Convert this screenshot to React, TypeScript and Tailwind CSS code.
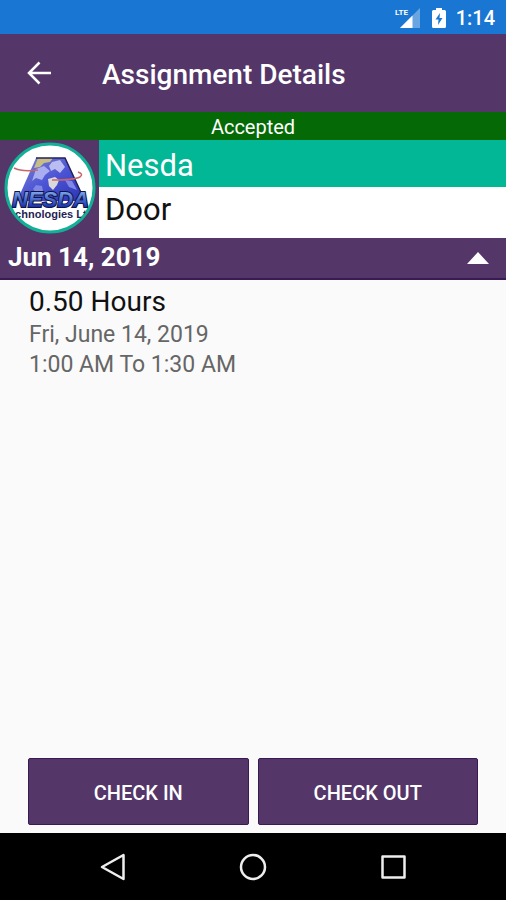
import { useState } from "react";

function StatusBar() {
  return (
    <div className="flex h-[34px] items-center justify-end bg-[#1976d2] pt-px pr-[11px] text-white">
      <svg width="26" height="24" viewBox="0 0 26 24" role="img" aria-label="LTE signal">
        <path d="M25 2V22H5Z" fill="#fff" opacity=".35" />
        <path d="M17.500 9.500V22H5Z" fill="#fff" />
        <path d="M0 1H15V10H0Z" fill="#1976d2" />
        <text x="0" y="9" fontSize="8" fontWeight="700" fontFamily="Roboto, sans-serif" fill="#fff">LTE</text>
      </svg>
      <svg className="ml-[10px]" width="16" height="22" viewBox="0 0 16 22" role="img" aria-label="Battery charging">
        <path d="M5 1h6v2h2.500q1.500 0 1.500 1.500v15q0 1.500-1.500 1.500h-11Q1 21 1 19.500v-15Q1 3 2.500 3H5Z" fill="#fff" />
        <path d="M9 6L4.500 12.500H7.500L7 18L11.500 11H8.500Z" fill="#1976d2" />
      </svg>
      <span className="ml-[9px] text-[20px] leading-6 font-medium">1:14</span>
    </div>
  );
}

function Logo() {
  return (
    <svg width="92" height="92" viewBox="0 0 92 92" role="img" aria-label="Nesda Technologies">
      <defs>
        <clipPath id="disc">
          <circle cx="46" cy="46" r="43" />
        </clipPath>
        <clipPath id="peak">
          <path d="M32 16H61L81 59H13Z" />
        </clipPath>
        <linearGradient id="sky" x1="0" y1="0" x2="1" y2="1">
          <stop offset="0" stopColor="#8086cc" />
          <stop offset=".5" stopColor="#4c54d6" />
          <stop offset="1" stopColor="#2a32b4" />
        </linearGradient>
        <linearGradient id="letters" x1="0" y1="0" x2="0" y2="1">
          <stop offset=".2" stopColor="#7aa3e8" />
          <stop offset=".8" stopColor="#1731b0" />
        </linearGradient>
      </defs>
      <circle cx="46" cy="46" r="44" fill="#fff" stroke="#12b096" strokeWidth="3" />
      <g clipPath="url(#disc)">
        <path d="M32 16H61L81 59H13Z" fill="url(#sky)" />
        <g clipPath="url(#peak)">
          <path d="M34 16h15l-3 4-6 1-4 4-6 1Z" fill="#c9bd86" />
          <path d="M48 20l8-2 5 7-5 6-5-4-4 2-2-5Z" fill="#b9bdf0" />
          <path d="M32 27l8-3 6 5-5 4-3 5-6-2-4 3Z" fill="#a9aef0" />
          <path d="M44 37l7-2 4 3-2 5-4 5-4-4Z" fill="#dcd8da" />
          <path d="M32 43l6 1 1 5-7 2-3-4ZM61 38l7 1 5 9-8-3Z" fill="#8087e4" />
        </g>
        <path d="M32 16H61L80 57" fill="none" stroke="#22215c" strokeWidth="1.500" />
        <path d="M10 26Q18 30 34 28M48 38Q70 38 76 35Q80 32 74 30" fill="none" stroke="#c7656c" strokeWidth="1.500" />
        <text
          x="8"
          y="65"
          fontSize="22"
          fontWeight="700"
          fontStyle="italic"
          fontFamily="'Liberation Sans', sans-serif"
          fill="url(#letters)"
          stroke="#10143f"
          strokeWidth="2"
          paintOrder="stroke"
        >
          NESDA
        </text>
        <text x="5" y="76" fontSize="11" fontWeight="700" fontFamily="'Liberation Sans', sans-serif" fill="#252352">echnologies Lt</text>
      </g>
    </svg>
  );
}

export default function App() {
  const [open, setOpen] = useState(true);
  return (
    <div className="flex min-h-screen flex-col bg-[#fafafa] font-['Roboto',sans-serif] text-white">
      <StatusBar />
      <header className="flex h-[78px] items-center bg-[#543669]">
        <button type="button" aria-label="Back" className="flex h-12 w-[78px] items-center justify-center">
          <svg width="26" height="26" viewBox="0 0 26 26" fill="none" stroke="#fff" strokeWidth="2.500">
            <path d="M25 13H3M13.500 2.500L3 13L13.500 23.500" />
          </svg>
        </button>
        <h1 className="ml-6 pt-1 text-[28px] leading-8 font-medium">Assignment Details</h1>
      </header>
      <p className="h-7 bg-[#056a05] pt-px text-center text-[20px] leading-7">Accepted</p>
      <section className="flex h-[98px] bg-[#543669]">
        <div className="flex w-[99px] shrink-0 justify-center pt-[2px]">
          <Logo />
        </div>
        <div className="flex-1 text-[31px]">
          <h2 className="h-[47px] bg-[#02b795] pt-1 pl-[6px] leading-[44px]">Nesda</h2>
          <p className="h-[51px] bg-white pl-[6px] leading-[46px] text-[#111]">Door</p>
        </div>
      </section>
      <button
        type="button"
        aria-expanded={open}
        onClick={() => setOpen(!open)}
        className="flex h-[42px] items-center justify-between border-b-2 border-[#3a1a55] bg-[#543669] pr-[17px] pl-2"
      >
        <span className="pb-[2px] text-[26px] leading-8 font-bold">Jun 14, 2019</span>
        <svg width="22" height="12" viewBox="0 0 22 12" className={open ? "" : "rotate-180"} aria-hidden="true">
          <path d="M0 12L11 0L22 12Z" fill="#fff" />
        </svg>
      </button>
      <main className="flex-1 px-[29px] pt-1">
        {open && (
          <>
            <h3 className="text-[28px] leading-9 text-[#111]">0.50 Hours</h3>
            <p className="text-[23px] leading-[30px] text-[#666]">Fri, June 14, 2019</p>
            <p className="text-[23px] leading-[30px] text-[#666]">1:00 AM To 1:30 AM</p>
          </>
        )}
      </main>
      <div className="flex gap-[9px] px-7 pb-2 text-[20px] font-medium">
        <button type="button" className="h-[67px] flex-1 rounded-xs border border-[#3a1a55] bg-[#543669] pt-[2px]">CHECK IN</button>
        <button type="button" className="h-[67px] flex-1 rounded-xs border border-[#3a1a55] bg-[#543669] pt-[2px]">CHECK OUT</button>
      </div>
      <nav className="grid h-[67px] grid-cols-3 items-center bg-black px-[43px]">
        <button type="button" aria-label="Back" className="flex h-12 items-center justify-center">
          <svg width="28" height="28" viewBox="0 0 28 28" fill="none" stroke="#eee" strokeWidth="2.500" strokeLinejoin="round">
            <path d="M24.500 2V26L3 14Z" />
          </svg>
        </button>
        <button type="button" aria-label="Home" className="flex h-12 items-center justify-center">
          <svg width="28" height="28" viewBox="0 0 28 28" fill="none" stroke="#eee" strokeWidth="2.500">
            <circle cx="14" cy="14" r="12" />
          </svg>
        </button>
        <button type="button" aria-label="Recent apps" className="flex h-12 items-center justify-center">
          <svg width="28" height="28" viewBox="0 0 28 28" fill="none" stroke="#eee" strokeWidth="2.500" strokeLinejoin="round">
            <path d="M3.500 3.500H25.500V24.500H3.500Z" />
          </svg>
        </button>
      </nav>
    </div>
  );
}
